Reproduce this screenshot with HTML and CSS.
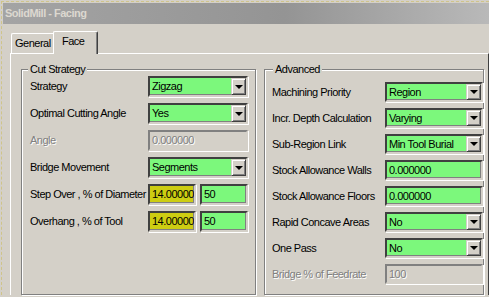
FILE: index.html
```html
<!DOCTYPE html>
<html lang="en">
<head>
    <meta charset="utf-8" />
    <title>SolidMill - Facing</title>
    <link rel="stylesheet" href="styles.css">
</head>
<body>
    <div class="frame">
        <div class="titlebar">SolidMill - Facing</div>

        <div class="tabs">
            <div class="tab tab-general">General</div>
            <div class="tab tab-face active">Face</div>
        </div>

        <div class="panel">
            <fieldset class="group group-cut">
                <legend>Cut Strategy</legend>
                <div class="rows">
                    <span class="label">Strategy</span>
                    <div class="combo"><span class="value">Zigzag</span><span class="drop"></span></div>

                    <span class="label">Optimal Cutting Angle</span>
                    <div class="combo"><span class="value">Yes</span><span class="drop"></span></div>

                    <span class="label off">Angle</span>
                    <div class="edit off">0.000000</div>

                    <span class="label">Bridge Movement</span>
                    <div class="combo"><span class="value">Segments</span><span class="drop"></span></div>

                    <span class="label">Step Over , % of Diameter</span>
                    <div class="pair">
                        <div class="edit yellow">14.00000</div>
                        <div class="edit">50</div>
                    </div>

                    <span class="label">Overhang , % of Tool</span>
                    <div class="pair">
                        <div class="edit yellow">14.00000</div>
                        <div class="edit">50</div>
                    </div>
                </div>
            </fieldset>

            <fieldset class="group group-adv">
                <legend>Advanced</legend>
                <div class="rows">
                    <span class="label">Machining Priority</span>
                    <div class="combo"><span class="value">Region</span><span class="drop"></span></div>

                    <span class="label">Incr. Depth Calculation</span>
                    <div class="combo"><span class="value">Varying</span><span class="drop"></span></div>

                    <span class="label">Sub-Region Link</span>
                    <div class="combo"><span class="value">Min Tool Burial</span><span class="drop"></span></div>

                    <span class="label">Stock Allowance Walls</span>
                    <div class="edit">0.000000</div>

                    <span class="label">Stock Allowance Floors</span>
                    <div class="edit">0.000000</div>

                    <span class="label">Rapid Concave Areas</span>
                    <div class="combo"><span class="value">No</span><span class="drop"></span></div>

                    <span class="label">One Pass</span>
                    <div class="combo"><span class="value">No</span><span class="drop"></span></div>

                    <span class="label off">Bridge % of Feedrate</span>
                    <div class="edit off">100</div>
                </div>
            </fieldset>
        </div>
    </div>
</body>
</html>
```

FILE: styles.css
```css
* {
    margin: 0;
    padding: 0;
}

html, body {
    width: 489px;
    height: 297px;
    overflow: hidden;
}

body {
    background: #d4d0c8;
    color: #000;
    font-family: "Liberation Sans", Arial, sans-serif;
    font-size: 11px;
    letter-spacing: -0.5px;
    line-height: 13px;
}

/* dashed selection frame round the picture */
.frame {
    margin: 1px 0 0 1px;
    border-top: 1px dashed #cfc48a;
    border-left: 1px dashed #cfc48a;
    padding: 1px 0 0 1px;
}

.titlebar {
    height: 21px;
    line-height: 21px;
    padding-left: 2px;
    background: linear-gradient(to right, #a4a4a4, #949494 58%, #b9b9b9);
    color: #dcd8d0;
    font-weight: bold;
}

/* tabs */
.tabs {
    height: 29px;
    display: flex;
    align-items: flex-end;
    padding-left: 8px;
}

.tab {
    box-sizing: border-box;
    height: 20px;
    padding-top: 3px;
    border-top: 1px solid #fff;
    border-left: 1px solid #fff;
    border-radius: 2px 2px 0 0;
    background: #d4d0c8;
}

.tab-general {
    width: 44px;
    padding-left: 3px;
}

.tab-face {
    width: 45px;
    padding-left: 8px;
}

.tab.active {
    position: relative;
    z-index: 1;
    height: 23px;
    margin-left: -2px;
    margin-bottom: -1px;
    border-right: 1px solid #404040;
    box-shadow: inset -1px 0 0 #808080;
}

.panel {
    width: 463px;
    height: 232px;
    margin-left: 7px;
    padding: 9px 4px 0 10px;
    border-top: 1px solid #fff;
    border-left: 1px solid #fff;
    border-right: 1px solid #404040;
    display: flex;
    gap: 8px;
}

/* group boxes, etched */
.group {
    box-sizing: border-box;
    min-width: 0;
    border: 1px solid #808080;
    box-shadow: inset 1px 1px 0 #fff, 1px 1px 0 #fff;
}

.group legend {
    padding: 0 2px;
    background: #d4d0c8;
    line-height: 13px;
}

.group-cut {
    width: 235px;
    padding: 0 7px 0 8px;
}

    .group-cut legend {
        margin-left: -2px;
    }

.group-adv {
    width: 220px;
    padding: 6px 0 0 7px;
}

    .group-adv legend {
        margin-left: 1px;
    }

.rows {
    display: grid;
    align-items: center;
    row-gap: 6px;
}

.group-cut .rows {
    grid-template-columns: 118px 100px;
    grid-auto-rows: 21px;
}

.group-adv .rows {
    grid-template-columns: 113px 98px;
    grid-auto-rows: 20px;
}

.label {
    white-space: nowrap;
}

.off {
    color: #808080;
    text-shadow: 1px 1px 0 #fff;
}

/* sunken fields */
.combo, .edit {
    box-sizing: border-box;
    height: 100%;
    border: 2px solid;
    border-color: #404040 #d4d0c8 #d4d0c8 #404040;
    box-shadow: -1px -1px 0 #808080 inset, 1px 1px 0 #fff;
    background: #7cf87c;
    white-space: nowrap;
    overflow: hidden;
}

.edit {
    padding-left: 2px;
    display: flex;
    align-items: center;
}

.edit.off {
    background: #d4d0c8;
    border-color: #808080 #d4d0c8 #d4d0c8 #808080;
    box-shadow: 1px 1px 0 #fff;
}

.edit.yellow {
    background: #cdcd12;
}

.pair {
    height: 100%;
    display: flex;
    gap: 4px;
}

    .pair .edit {
        width: 48px;
    }

.combo {
    display: flex;
    align-items: stretch;
}

    .combo .value {
        flex: 1;
        padding-left: 2px;
        display: flex;
        align-items: center;
        overflow: hidden;
    }

/* raised drop-down button */
.drop {
    box-sizing: border-box;
    width: 15px;
    border: 1px solid;
    border-color: #d4d0c8 #404040 #404040 #d4d0c8;
    box-shadow: inset 1px 1px 0 #fff, inset -1px -1px 0 #808080;
    background: #d4d0c8;
    display: flex;
    align-items: center;
    justify-content: center;
}

    .drop::after {
        content: "";
        width: 0;
        height: 0;
        border-left: 4px solid transparent;
        border-right: 4px solid transparent;
        border-top: 4px solid #000;
    }
```
